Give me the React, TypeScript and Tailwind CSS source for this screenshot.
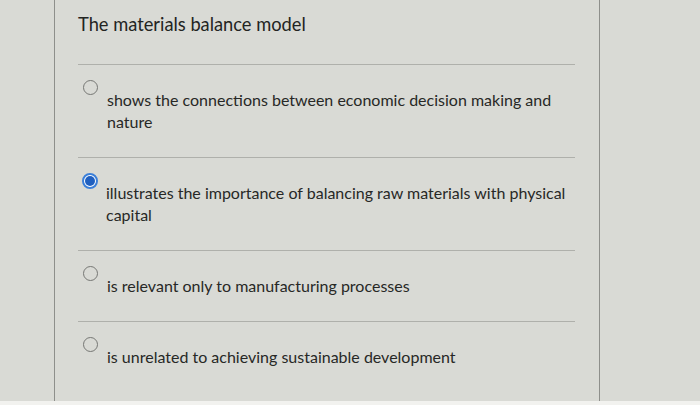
import React from "react";

const options = [
  { text: "shows the connections between economic decision making and nature", selected: false },
  { text: "illustrates the importance of balancing raw materials with physical capital", selected: true },
  { text: "is relevant only to manufacturing processes", selected: false },
  { text: "is unrelated to achieving sustainable development", selected: false },
];

function Radio({ selected }: { selected: boolean }) {
  if (selected) {
    return (
      <div className="w-[16px] h-[16px] rounded-full border-[2px] border-[#3b7fd9] bg-white flex items-center justify-center shrink-0">
        <div className="w-[10px] h-[10px] rounded-full bg-[#1f5fc0]" />
      </div>
    );
  }
  return <div className="w-[15px] h-[15px] rounded-full border-[1.5px] border-[#767774] shrink-0" />;
}

export default function App() {
  return (
    <div
      className="w-[700px] h-[405px] bg-[#d9dad5] flex flex-col overflow-hidden text-[#272826]"
      style={{ fontFamily: "Lato, 'Open Sans', sans-serif" }}
    >
      <div className="flex flex-1">
        <div className="w-[55px] border-r border-[#8e8f8b]" />
        <div className="w-[545px] border-r border-[#8e8f8b] pl-[23px] pr-[24px]">
          <div className="pt-[13px] h-[64px] text-[18.3px] leading-[22px] text-[#232422]">
            The materials balance model
          </div>
          {options.map((o, i) => (
            <div
              key={i}
              className={`border-t border-[#afb0ab] flex items-start ${i === 3 ? "" : "pb-[24px]"}`}
            >
              <div className={`${o.selected ? "mt-[15px] ml-[4px]" : "mt-[15px] ml-[5px]"}`}>
                <Radio selected={o.selected} />
              </div>
              <div
                className={`${o.selected ? "ml-[8px]" : "ml-[9px]"} mt-[24px] text-[16px] leading-[22px] max-w-[475px]`}
              >
                {o.text}
              </div>
            </div>
          ))}
        </div>
        <div className="flex-1" />
      </div>
      <div className="h-[4px] bg-[#f2f2ef]" />
    </div>
  );
}
